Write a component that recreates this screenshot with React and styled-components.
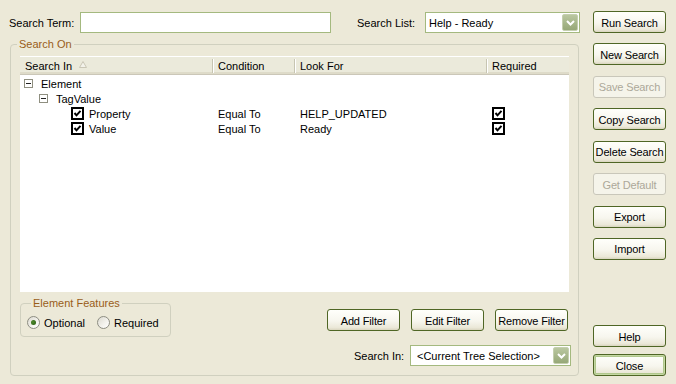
import React from "react";
import styled, { createGlobalStyle } from "styled-components";

const GlobalStyle = createGlobalStyle`
  html, body {
    margin: 0;
    padding: 0;
    background: #ece9d8;
  }
  body {
    font-family: "Liberation Sans", Arial, sans-serif;
    font-size: 11px;
    color: #000;
  }
`

const Window = styled.div`
  width: 676px;
  height: 384px;
  box-sizing: border-box;
  padding: 11px 10px 8px 9px;
  display: flex;
  gap: 13px;
  background: #ece9d8;
  overflow: hidden;
`

const Main = styled.div`
  width: 571px;
  display: flex;
  flex-direction: column;
`

const TopRow = styled.div`
  margin-top: 1px;
  height: 21px;
  display: flex;
  justify-content: space-between;
  align-items: center;
`

const Field = styled.div`
  display: flex;
  align-items: center;
`

const Label = styled.span`
  width: ${p => p.$w}px;
  white-space: nowrap;
`

const TextInput = styled.div`
  width: ${p => p.$w}px;
  height: 21px;
  box-sizing: border-box;
  border: 1px solid #a4b97f;
  background: #fff;
`

const Select = styled.div`
  width: ${p => p.$w}px;
  height: 21px;
  box-sizing: border-box;
  border: 1px solid #a4b97f;
  background: #fff;
  display: flex;
  align-items: center;
  padding: 0 1px 0 ${p => p.$pad}px;
  white-space: nowrap;
`

const SelectText = styled.span`
  flex: 1;
`

const ArrowBtn = styled.div`
  width: 16px;
  height: 17px;
  box-sizing: border-box;
  border: 1px solid #c4cfae;
  border-radius: 2px;
  background: linear-gradient(180deg, #bac7a0 0%, #a4b487 60%, #97a878 100%);
  display: flex;
  align-items: center;
  justify-content: center;
`

const Fieldset = styled.fieldset`
  box-sizing: border-box;
  margin: ${p => p.$margin};
  padding: ${p => p.$padding};
  border: 1px solid #d0d0bf;
  border-radius: 4px;
  min-width: 0;
  width: ${p => (p.$w ? `${p.$w}px` : "auto")};
  flex: ${p => (p.$grow ? 1 : "none")};
  display: flex;
  flex-direction: column;
`

const Legend = styled.legend`
  padding: 0 2px;
  margin-left: ${p => p.$ml}px;
  color: #995d18;
  font-size: 11px;
  line-height: 13px;
`

const ListView = styled.div`
  height: 236px;
  background: #fff;
  display: flex;
  flex-direction: column;
`

const HeaderRow = styled.div`
  height: 19px;
  box-sizing: border-box;
  display: grid;
  grid-template-columns: 192px 82px 192px 83px;
  background: #ebeadb;
  border-top: 1px solid #fff;
  border-bottom: 1px solid #cbc7b8;
  box-shadow: inset 0 -2px #dedbc9;
`

const HeaderCell = styled.div`
  display: flex;
  align-items: center;
  padding-left: ${p => (p.$first ? 5 : 0)}px;
`

const Sep = styled.span`
  width: 1px;
  height: 14px;
  background: #c7c5b2;
  border-right: 1px solid #fff;
  margin-right: 4px;
`

const SortArrow = styled.svg`
  margin-left: 7px;
  margin-top: -2px;
`

const Rows = styled.div`
  padding-top: 1px;
`

const Row = styled.div`
  height: 15px;
  display: grid;
  grid-template-columns: 192px 82px 192px 83px;
  align-items: center;
  white-space: nowrap;
`

const Cell = styled.div`
  display: flex;
  align-items: center;
  padding-left: ${p => p.$pad}px;
`

const Expander = styled.svg`
  margin-right: 8px;
  flex: none;
`

const Check = styled.svg`
  margin-right: 5px;
  margin-top: -1px;
  flex: none;
`

const Bottom = styled.div`
  display: flex;
  justify-content: space-between;
  align-items: flex-start;
`

const RadioRow = styled.div`
  height: 13px;
  display: flex;
  align-items: center;
`

const RadioItem = styled.label`
  display: flex;
  align-items: center;
  gap: 4px;
  margin-right: 12px;
`

const RadioCircle = styled.span`
  width: 13px;
  height: 13px;
  box-sizing: border-box;
  border-radius: 50%;
  border: 1px solid #8d8d82;
  background: linear-gradient(135deg, #dcdad0 0%, #f4f3ee 60%, #fff 100%);
  display: flex;
  align-items: center;
  justify-content: center;
`

const RadioDot = styled.span`
  width: 5px;
  height: 5px;
  border-radius: 50%;
  background: radial-gradient(circle at 40% 40%, #4f8a2c, #245a10);
`

const Actions = styled.div`
  display: flex;
  flex-direction: column;
  align-items: flex-end;
  margin-top: 17px;
`

const ButtonRow = styled.div`
  display: flex;
  gap: 11px;
  margin-right: 1px;
`

const SearchInRow = styled(Field)`
  margin-top: 14px;
  margin-right: -2px;
`

const Side = styled.div`
  width: 73px;
  display: flex;
  flex-direction: column;
`

const ButtonStack = styled.div`
  display: flex;
  flex-direction: column;
  gap: 10.43px;
`

const BottomStack = styled.div`
  margin-top: auto;
  display: flex;
  flex-direction: column;
  gap: 7px;
`

const Button = styled.div`
  width: 73px;
  height: 22px;
  box-sizing: border-box;
  border: 1px solid ${p => (p.$disabled ? "#c9c7ba" : "#4f6625")};
  border-radius: 3px;
  background: ${p =>
    p.$disabled
      ? "#f5f4ea"
      : "linear-gradient(180deg, #fffffb 0%, #f7f6ee 55%, #ebe8d8 88%, #d9d5bf 100%)"};
  color: ${p => (p.$disabled ? "#aca899" : "#000")};
  box-shadow: ${p => (p.$default ? "inset 0 0 0 1px #c5d8a3, inset 0 0 0 2px #b0c78c" : "none")};
  display: flex;
  align-items: center;
  justify-content: center;
  padding-top: 1px;
  letter-spacing: -0.15px;
  white-space: nowrap;
  overflow: hidden;
`

const Chevron = () => (
  <svg width="9" height="6" viewBox="0 0 9 6">
    <path d="M1 1 L4.5 4.5 L8 1" fill="none" stroke="#fff" strokeWidth="2" />
  </svg>
)

const Dropdown = ({ w, pad, children }) => (
  <Select $w={w} $pad={pad}>
    <SelectText>{children}</SelectText>
    <ArrowBtn>
      <Chevron />
    </ArrowBtn>
  </Select>
)

const Box = () => (
  <Expander width="9" height="9" viewBox="0 0 9 9">
    <rect x="0.5" y="0.5" width="8" height="8" fill="#fff" stroke="#8f8f80" />
    <path d="M2 4.5 H7" stroke="#222" />
  </Expander>
)

const Checked = () => (
  <Check width="13" height="13" viewBox="0 0 13 13">
    <rect x="1" y="1" width="11" height="11" fill="#fff" stroke="#000" strokeWidth="2" />
    <path d="M3.5 6 L5.5 8.3 L9.5 3.8" fill="none" stroke="#000" strokeWidth="2" />
  </Check>
)

const Radio = ({ checked, children }) => (
  <RadioItem>
    <RadioCircle>{checked && <RadioDot />}</RadioCircle>
    {children}
  </RadioItem>
)

const filters = [
  { name: "Property", cond: "Equal To", look: "HELP_UPDATED" },
  { name: "Value", cond: "Equal To", look: "Ready" },
]

const sideButtons = [
  { label: "Run Search" },
  { label: "New Search" },
  { label: "Save Search", disabled: true },
  { label: "Copy Search" },
  { label: "Delete Search" },
  { label: "Get Default", disabled: true },
  { label: "Export" },
  { label: "Import" },
]

const App = () => {
  return (
    <Window>
      <GlobalStyle />
      <Main>
        <TopRow>
          <Field>
            <Label $w={71}>Search Term:</Label>
            <TextInput $w={251} />
          </Field>
          <Field>
            <Label $w={68}>Search List:</Label>
            <Dropdown w={155} pad={3}>Help - Ready</Dropdown>
          </Field>
        </TopRow>

        <Fieldset $grow $margin="5px 1px 0 1px" $padding="5px 9px 0 9px">
          <Legend $ml={-3}>Search On</Legend>
          <ListView>
            <HeaderRow>
              <HeaderCell $first>
                Search In
                <SortArrow width="8" height="7" viewBox="0 0 8 7">
                  <path d="M0.5 6.5 L4 0.5 L7.5 6.5 Z" fill="#f3f2ea" stroke="#c9c6b5" />
                </SortArrow>
              </HeaderCell>
              <HeaderCell><Sep />Condition</HeaderCell>
              <HeaderCell><Sep />Look For</HeaderCell>
              <HeaderCell><Sep />Required</HeaderCell>
            </HeaderRow>
            <Rows>
              <Row>
                <Cell $pad={4}><Box />Element</Cell>
              </Row>
              <Row>
                <Cell $pad={19}><Box />TagValue</Cell>
              </Row>
              {filters.map(f => (
                <Row key={f.name}>
                  <Cell $pad={51}><Checked />{f.name}</Cell>
                  <Cell $pad={6}>{f.cond}</Cell>
                  <Cell $pad={6}>{f.look}</Cell>
                  <Cell $pad={6}><Checked /></Cell>
                </Row>
              ))}
            </Rows>
          </ListView>

          <Bottom>
            <Fieldset $w={151} $margin="5px 0 0 0" $padding="6px 6px 7px 6px">
              <Legend $ml={4}>Element Features</Legend>
              <RadioRow>
                <Radio checked>Optional</Radio>
                <Radio>Required</Radio>
              </RadioRow>
            </Fieldset>
            <Actions>
              <ButtonRow>
                <Button>Add Filter</Button>
                <Button>Edit Filter</Button>
                <Button>Remove Filter</Button>
              </ButtonRow>
              <SearchInRow>
                <Label $w={56}>Search In:</Label>
                <Dropdown w={161} pad={6}>&lt;Current Tree Selection&gt;</Dropdown>
              </SearchInRow>
            </Actions>
          </Bottom>
        </Fieldset>
      </Main>

      <Side>
        <ButtonStack>
          {sideButtons.map(b => (
            <Button key={b.label} $disabled={b.disabled}>{b.label}</Button>
          ))}
        </ButtonStack>
        <BottomStack>
          <Button>Help</Button>
          <Button $default>Close</Button>
        </BottomStack>
      </Side>
    </Window>
  )
}

export default App
